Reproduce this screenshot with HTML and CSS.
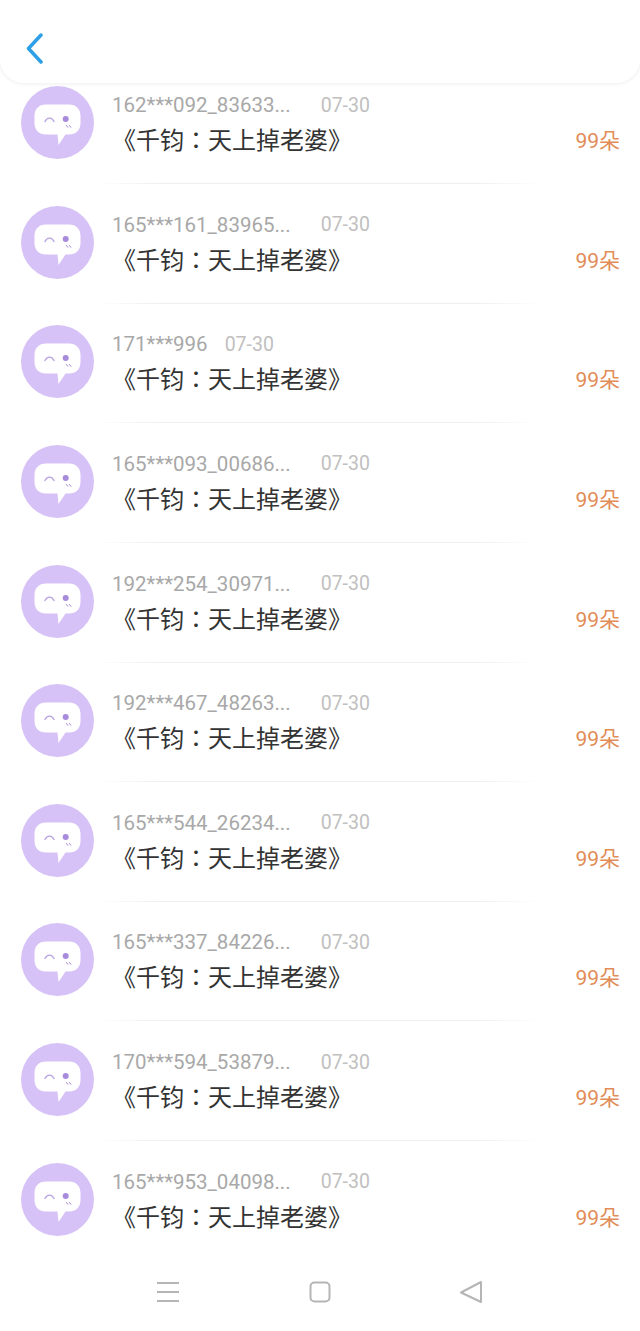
FILE: index.html
```html
<!DOCTYPE html>
<html lang="zh-CN">
<head>
    <meta charset="UTF-8">
    <meta name="viewport" content="width=device-width, initial-scale=1.0">
    <title>礼物记录</title>
    <link rel="stylesheet" href="styles.css">
</head>
<body>
    <svg class="sprite" width="0" height="0">
        <symbol id="avatar" viewBox="0 0 73 73">
            <circle cx="36.5" cy="36.5" r="36.500" fill="#d6c2f6"/>
            <path d="M25 18.500H48C55 18.500 59.500 23 59.500 30V37C59.500 44 55 48.500 48 48.500H44.500L37.500 59L36.500 48.500H25C18 48.500 13.500 44 13.500 37V30C13.500 23 18 18.500 25 18.500Z" fill="#fff"/>
            <path d="M24 35.500C26 31 31 31 33 35.500" fill="none" stroke="#b9a3e0" stroke-width="1.400" stroke-linecap="round"/>
            <circle cx="44.700" cy="33" r="3" fill="#a98bdc"/>
            <path d="M45.500 39.500L46.800 41.300M48.500 39.500L49.800 41.300" fill="none" stroke="#a98bdc" stroke-width="1" stroke-linecap="round"/>
        </symbol>
    </svg>

    <header class="topbar">
        <svg class="back" width="20" height="32" viewBox="0 0 20 32">
            <path d="M17 3L4.500 16.500L17 30" fill="none" stroke="#2d9fe6" stroke-width="3.500" stroke-linecap="round" stroke-linejoin="round"/>
        </svg>
    </header>

    <main class="list">
        <div class="row">
            <svg class="avatar"><use href="#avatar"/></svg>
            <div class="info">
                <div class="meta"><span class="name">162***092_83633...</span><span class="date">07-30</span></div>
                <div class="title" lang="zh-TW">《千钧：天上掉老婆》</div>
            </div>
            <div class="price">99朵</div>
            <div class="line"></div>
        </div>
        <div class="row">
            <svg class="avatar"><use href="#avatar"/></svg>
            <div class="info">
                <div class="meta"><span class="name">165***161_83965...</span><span class="date">07-30</span></div>
                <div class="title" lang="zh-TW">《千钧：天上掉老婆》</div>
            </div>
            <div class="price">99朵</div>
            <div class="line"></div>
        </div>
        <div class="row">
            <svg class="avatar"><use href="#avatar"/></svg>
            <div class="info">
                <div class="meta short"><span class="name">171***996</span><span class="date">07-30</span></div>
                <div class="title" lang="zh-TW">《千钧：天上掉老婆》</div>
            </div>
            <div class="price">99朵</div>
            <div class="line"></div>
        </div>
        <div class="row">
            <svg class="avatar"><use href="#avatar"/></svg>
            <div class="info">
                <div class="meta"><span class="name">165***093_00686...</span><span class="date">07-30</span></div>
                <div class="title" lang="zh-TW">《千钧：天上掉老婆》</div>
            </div>
            <div class="price">99朵</div>
            <div class="line"></div>
        </div>
        <div class="row">
            <svg class="avatar"><use href="#avatar"/></svg>
            <div class="info">
                <div class="meta"><span class="name">192***254_30971...</span><span class="date">07-30</span></div>
                <div class="title" lang="zh-TW">《千钧：天上掉老婆》</div>
            </div>
            <div class="price">99朵</div>
            <div class="line"></div>
        </div>
        <div class="row">
            <svg class="avatar"><use href="#avatar"/></svg>
            <div class="info">
                <div class="meta"><span class="name">192***467_48263...</span><span class="date">07-30</span></div>
                <div class="title" lang="zh-TW">《千钧：天上掉老婆》</div>
            </div>
            <div class="price">99朵</div>
            <div class="line"></div>
        </div>
        <div class="row">
            <svg class="avatar"><use href="#avatar"/></svg>
            <div class="info">
                <div class="meta"><span class="name">165***544_26234...</span><span class="date">07-30</span></div>
                <div class="title" lang="zh-TW">《千钧：天上掉老婆》</div>
            </div>
            <div class="price">99朵</div>
            <div class="line"></div>
        </div>
        <div class="row">
            <svg class="avatar"><use href="#avatar"/></svg>
            <div class="info">
                <div class="meta"><span class="name">165***337_84226...</span><span class="date">07-30</span></div>
                <div class="title" lang="zh-TW">《千钧：天上掉老婆》</div>
            </div>
            <div class="price">99朵</div>
            <div class="line"></div>
        </div>
        <div class="row">
            <svg class="avatar"><use href="#avatar"/></svg>
            <div class="info">
                <div class="meta"><span class="name">170***594_53879...</span><span class="date">07-30</span></div>
                <div class="title" lang="zh-TW">《千钧：天上掉老婆》</div>
            </div>
            <div class="price">99朵</div>
            <div class="line"></div>
        </div>
        <div class="row">
            <svg class="avatar"><use href="#avatar"/></svg>
            <div class="info">
                <div class="meta"><span class="name">165***953_04098...</span><span class="date">07-30</span></div>
                <div class="title" lang="zh-TW">《千钧：天上掉老婆》</div>
            </div>
            <div class="price">99朵</div>
        </div>
    </main>

    <nav class="navbar">
        <svg width="24" height="22" viewBox="0 0 24 22">
            <path d="M1 2H23M1 11H23M1 20H23" fill="none" stroke="#b5b5b5" stroke-width="2"/>
        </svg>
        <svg width="22" height="22" viewBox="0 0 22 22">
            <rect x="1.500" y="1.500" width="19" height="19" rx="4" fill="none" stroke="#b5b5b5" stroke-width="2"/>
        </svg>
        <svg width="24" height="24" viewBox="0 0 24 24">
            <path d="M22 2V22L2 12.500Z" fill="none" stroke="#b5b5b5" stroke-width="2" stroke-linejoin="round"/>
        </svg>
    </nav>
</body>
</html>
```

FILE: styles.css
```css
body {
    margin: 0;
    width: 640px;
    height: 1331px;
    overflow: hidden;
    background-color: #ffffff;
    font-family: "Roboto", "Noto Sans CJK SC", sans-serif;
}

.sprite {
    display: block;
}

.topbar {
    height: 83px;
    box-sizing: border-box;
    padding: 32px 0 0 24px;
    background-color: #ffffff;
    border-radius: 0 0 24px 24px;
    box-shadow: 0 1px 4px rgba(0, 0, 0, 0.07);
    position: relative;
}

.back {
    display: block;
}

.row {
    position: relative;
    height: 119.65px;
    box-sizing: border-box;
    padding: 3px 20px 0 21px;
    display: flex;
    align-items: flex-start;
}

.avatar {
    width: 73px;
    height: 73px;
    flex-shrink: 0;
}

.info {
    margin-left: 18px;
    flex: 1;
    min-width: 0;
}

.meta {
    display: flex;
    gap: 30px;
    height: 30px;
    align-items: center;
    margin-top: 4px;
}

.meta.short {
    gap: 17px;
}

.name {
    font-size: 20.5px;
    color: #a8a8a8;
}

.date {
    font-size: 19.5px;
    color: #c0c0c0;
}

.title {
    font-family: "Roboto", "Noto Sans CJK TC", sans-serif;
    font-size: 24px;
    line-height: 36px;
    margin-top: 3px;
    color: #333333;
}

.price {
    font-size: 21px;
    line-height: 30px;
    margin-top: 40px;
    color: #e28c57;
}

.line {
    position: absolute;
    left: 95px;
    top: 100px;
    width: 445px;
    height: 1px;
    background: linear-gradient(to right, #ffffff, #eeeeee 15%, #eeeeee 85%, #ffffff);
}

.navbar {
    display: flex;
    justify-content: space-between;
    align-items: center;
    height: 22px;
    margin-top: 1.5px;
    padding: 0 157px 0 156px;
}
```
